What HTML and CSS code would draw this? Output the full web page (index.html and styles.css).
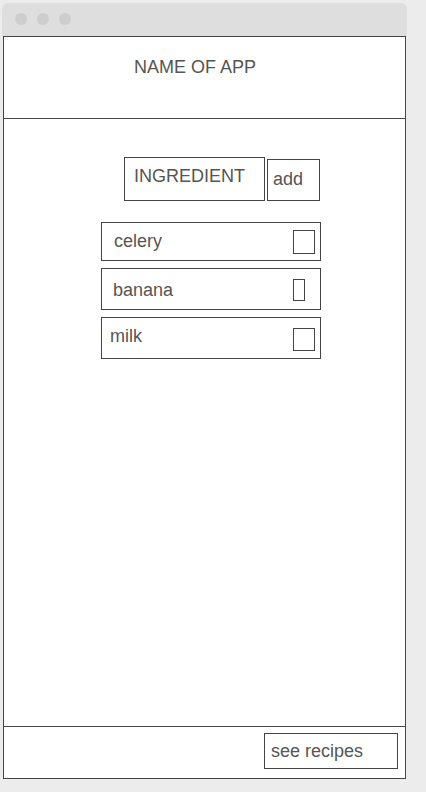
FILE: index.html
```html
<!DOCTYPE html>
<html lang="en">
<head>
    <meta charset="UTF-8">
    <title>Name of app - wireframe</title>
    <link rel="stylesheet" href="styles.css">
</head>

<body>
    <!-- window frame of the mockup -->
    <div class="window">
        <div class="titlebar">
            <span class="dot"></span>
            <span class="dot"></span>
            <span class="dot"></span>
        </div>

        <div class="frame">
            <header class="header">
                <h1 class="app-name">NAME OF APP</h1>
            </header>

            <main class="main">
                <div class="add-form">
                    <div class="ingredient-input">INGREDIENT</div>
                    <div class="add-btn">add</div>
                </div>

                <ul class="list">
                    <li class="item item-celery">
                        <span class="item-name">celery</span>
                        <span class="check"></span>
                    </li>
                    <li class="item item-banana">
                        <span class="item-name">banana</span>
                        <span class="check"></span>
                    </li>
                    <li class="item item-milk">
                        <span class="item-name">milk</span>
                        <span class="check"></span>
                    </li>
                </ul>
            </main>

            <footer class="footer">
                <div class="recipes-btn">see recipes</div>
            </footer>
        </div>
    </div>
</body>
</html>
```

FILE: styles.css
```css
html,
body {
    margin: 0;
    padding: 0;
}

body {
    background-color: #ececec;
    font: 18px/20px "Liberation Sans", Arial, sans-serif;
    color: #555;
}

ul {
    /*reset*/
    margin: 0;
    padding: 0;
    list-style: none;
}

* {
    box-sizing: border-box;
}

/*window*/
.window {
    width: 405px;
    margin: 3px 0 0 2px;
}

.titlebar {
    display: flex;
    gap: 10px;
    height: 33px;
    padding: 10px 0 0 13px;
    background-color: #dedede;
    border-radius: 6px 6px 0 0;
}

.dot {
    width: 12px;
    height: 12px;
    border-radius: 50%;
    background-color: #cdcdcd;
}

.frame {
    display: flex;
    flex-direction: column;
    width: 403px;
    height: 743px;
    margin-left: 1px;
    background-color: #fff;
    border: 1px solid #444;
}

/*header*/
.header {
    height: 82px;
    padding: 20px 0 0 130px;
    border-bottom: 1px solid #444;
}

.app-name {
    margin: 0;
    font: inherit;
}

/*main*/
.main {
    height: 607px;
}

.add-form {
    display: flex;
    align-items: flex-end;
    gap: 2px;
    margin: 38px 0 21px 120px;
}

.ingredient-input {
    width: 141px;
    height: 44px;
    padding: 8px 0 0 9px;
    border: 1px solid #444;
}

.add-btn {
    width: 53px;
    height: 42px;
    padding: 9px 0 0 5px;
    border: 1px solid #444;
}

.list {
    display: flex;
    flex-direction: column;
    gap: 7px;
    margin-left: 97px;
}

.item {
    display: flex;
    justify-content: space-between;
    align-items: flex-start;
    width: 220px;
    height: 42px;
    padding-right: 5px;
    border: 1px solid #444;
}

.check {
    width: 22px;
    height: 23px;
    margin-top: 10px;
    border: 1px solid #444;
}

.item-celery {
    height: 39px;
}

.item-celery .item-name {
    padding: 8px 0 0 12px;
}

.item-celery .check {
    height: 24px;
    margin-top: 7px;
}

.item-banana .item-name {
    padding: 11px 0 0 11px;
}

/*banana checkbox is a narrow one*/
.item-banana .check {
    width: 12px;
    height: 22px;
    margin-right: 10px;
}

.item-milk .item-name {
    padding: 8px 0 0 8px;
}

/*footer*/
.footer {
    display: flex;
    justify-content: flex-end;
    height: 52px;
    padding: 6px 7px 0 0;
    border-top: 1px solid #444;
}

.recipes-btn {
    width: 134px;
    height: 36px;
    padding: 7px 0 0 6px;
    border: 1px solid #444;
}
```
